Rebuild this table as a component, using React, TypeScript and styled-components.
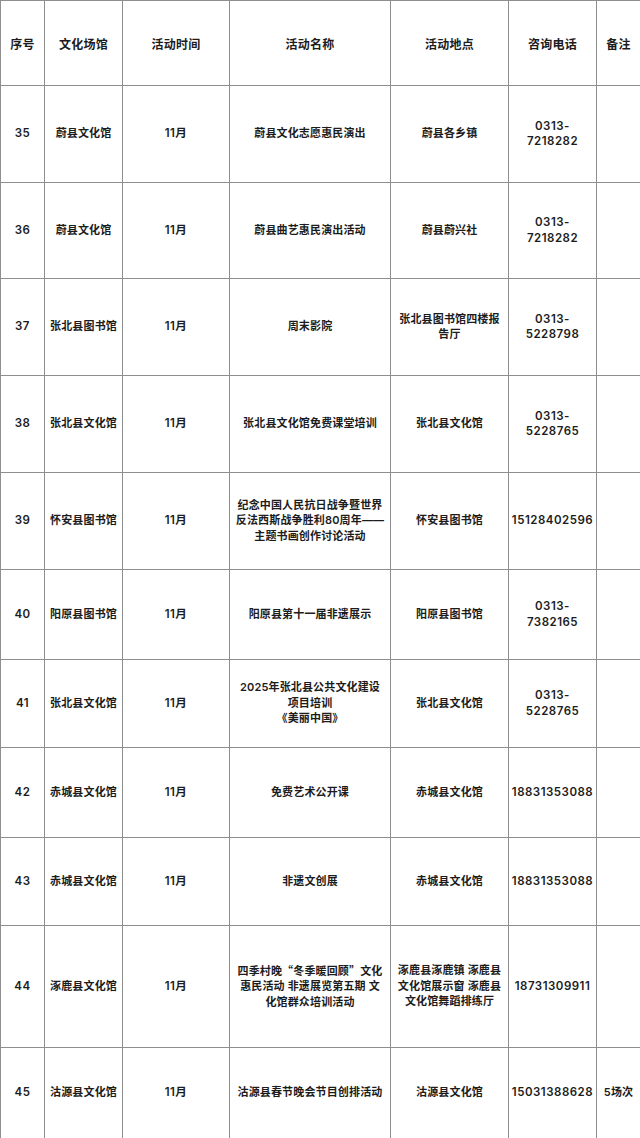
import React from 'react'
import styled, { createGlobalStyle } from 'styled-components'

const GlobalStyle = createGlobalStyle`
  html, body {
    margin: 0;
    padding: 0;
    background: #fff;
  }
  body {
    font-family: Inter, "Noto Sans CJK SC", sans-serif;
    color: #1c1c1c;
  }
`

type Activity = {
  no: number
  venue: string
  name: string[]
  place: string[]
  phone: string[]
  note?: string
  height: number
}

const columns = [44, 78, 107, 161, 118, 88, 44]

const rows: Activity[] = [
  { no: 35, venue: '蔚县文化馆', name: ['蔚县文化志愿惠民演出'], place: ['蔚县各乡镇'], phone: ['0313-', '7218282'], height: 97 },
  { no: 36, venue: '蔚县文化馆', name: ['蔚县曲艺惠民演出活动'], place: ['蔚县蔚兴社'], phone: ['0313-', '7218282'], height: 96 },
  { no: 37, venue: '张北县图书馆', name: ['周末影院'], place: ['张北县图书馆四楼报', '告厅'], phone: ['0313-', '5228798'], height: 97 },
  { no: 38, venue: '张北县文化馆', name: ['张北县文化馆免费课堂培训'], place: ['张北县文化馆'], phone: ['0313-', '5228765'], height: 97 },
  {
    no: 39,
    venue: '怀安县图书馆',
    name: ['纪念中国人民抗日战争暨世界', '反法西斯战争胜利80周年——', '主题书画创作讨论活动'],
    place: ['怀安县图书馆'],
    phone: ['15128402596'],
    height: 97,
  },
  { no: 40, venue: '阳原县图书馆', name: ['阳原县第十一届非遗展示'], place: ['阳原县图书馆'], phone: ['0313-', '7382165'], height: 90 },
  {
    no: 41,
    venue: '张北县文化馆',
    name: ['2025年张北县公共文化建设', '项目培训', '《美丽中国》'],
    place: ['张北县文化馆'],
    phone: ['0313-', '5228765'],
    height: 88,
  },
  { no: 42, venue: '赤城县文化馆', name: ['免费艺术公开课'], place: ['赤城县文化馆'], phone: ['18831353088'], height: 90 },
  { no: 43, venue: '赤城县文化馆', name: ['非遗文创展'], place: ['赤城县文化馆'], phone: ['18831353088'], height: 88 },
  {
    no: 44,
    venue: '涿鹿县文化馆',
    name: ['四季村晚“冬季暖回顾”文化', '惠民活动 非遗展览第五期 文', '化馆群众培训活动'],
    place: ['涿鹿县涿鹿镇 涿鹿县', '文化馆展示窗 涿鹿县', '文化馆舞蹈排练厅'],
    phone: ['18731309911'],
    height: 122,
  },
  {
    no: 45,
    venue: '沽源县文化馆',
    name: ['沽源县春节晚会节目创排活动'],
    place: ['沽源县文化馆'],
    phone: ['15031388628'],
    note: '5场次',
    height: 91,
  },
]

const headers = ['序号', '文化场馆', '活动时间', '活动名称', '活动地点', '咨询电话', '备注']

const Page = styled.div`
  width: 640px;
  background: #fff;
`

const Table = styled.table`
  width: 640px;
  table-layout: fixed;
  border-collapse: collapse;
  border: 1px solid #8e8e8e;
`

const Row = styled.tr<{ $h: number }>`
  height: ${({ $h }) => $h}px;
`

const HeadCell = styled.th`
  border: 1px solid #8e8e8e;
  padding: 0;
  font-size: 12px;
  font-weight: 700;
  text-align: center;
  vertical-align: middle;
  letter-spacing: 0.2px;
`

const Cell = styled.td<{ $num?: boolean }>`
  border: 1px solid #8e8e8e;
  padding: 0;
  font-size: ${({ $num }) => ($num ? '11.5px' : '11px')};
  font-weight: 600;
  line-height: 15.5px;
  text-align: center;
  vertical-align: middle;
  white-space: nowrap;
  letter-spacing: ${({ $num }) => ($num ? '0.5px' : '0.15px')};
`

const Line = styled.div`
  display: block;
`

// full-width quotes come from the CJK face, as in the source sheet
const Quote = styled.span`
  font-family: "Noto Sans CJK SC", sans-serif;
`

function Text({ value }: { value: string }) {
  const parts = value.split(/([“”])/)
  return (
    <>
      {parts.map((p, i) => (p === '“' || p === '”' ? <Quote key={i}>{p}</Quote> : p))}
    </>
  )
}

function Lines({ items }: { items: string[] }) {
  return (
    <>
      {items.map((t, i) => (
        <Line key={i}>
          <Text value={t} />
        </Line>
      ))}
    </>
  )
}

export default function App() {
  return (
    <Page>
      <GlobalStyle />
      <Table>
        <colgroup>
          {columns.map((w, i) => (
            <col key={i} style={{ width: w }} />
          ))}
        </colgroup>
        <thead>
          <Row $h={85}>
            {headers.map((h) => (
              <HeadCell key={h}>{h}</HeadCell>
            ))}
          </Row>
        </thead>
        <tbody>
          {rows.map((r) => (
            <Row key={r.no} $h={r.height}>
              <Cell $num>{r.no}</Cell>
              <Cell>{r.venue}</Cell>
              <Cell $num>11月</Cell>
              <Cell>
                <Lines items={r.name} />
              </Cell>
              <Cell>
                <Lines items={r.place} />
              </Cell>
              <Cell $num>
                <Lines items={r.phone} />
              </Cell>
              <Cell>{r.note}</Cell>
            </Row>
          ))}
        </tbody>
      </Table>
    </Page>
  )
}
